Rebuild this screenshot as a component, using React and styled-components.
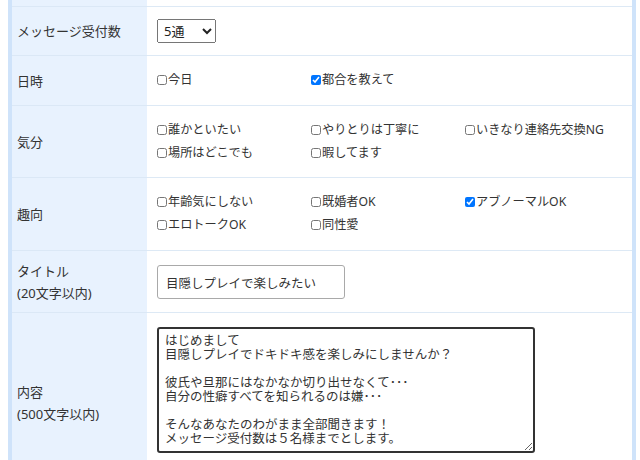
import React from "react";
import styled, { createGlobalStyle } from "styled-components";

const FONT = `"Noto Sans", "Noto Sans CJK JP", sans-serif`;

const Global = createGlobalStyle`
  html, body { margin: 0; padding: 0; background: #fff; }
  body { font-family: ${FONT}; color: #333; overflow: hidden; }
`;

const Table = styled.div`
  margin: 0 4px 0 8px;
  border-left: 4px solid #cfe3fa;
  border-right: 4px solid #cfe3fa;
  display: grid;
  grid-template-columns: 135px 1fr;
`;

const Label = styled.div`
  background: #e8f2fe;
  border-bottom: 1px solid #dbe8f6;
  display: flex;
  align-items: center;
  padding-left: 5px;
  font-size: 13px;
  line-height: 22px;
  color: #333;
  white-space: pre-line;
`;

const Cell = styled.div`
  border-bottom: 1px solid #dde9f5;
  padding: ${(p) => p.$pad || "15px 0 16px"};
  padding-left: 10px;
  display: flex;
  align-items: flex-start;
`;

const Select = styled.select`
  width: 59px;
  height: 24px;
  font-family: ${FONT};
  font-size: 13px;
  color: #222;
  padding: 0 2px;
`;

const Checks = styled.div`
  display: grid;
  grid-template-columns: repeat(3, 154px);
  row-gap: 5px;
`;

const Check = styled.label`
  display: flex;
  align-items: center;
  font-size: 12.2px;
  line-height: 18px;
  color: #333;
  white-space: nowrap;
  input {
    width: 10px;
    height: 10px;
    margin: 0 1px 0 0;
  }
`;

const TextInput = styled.input`
  box-sizing: border-box;
  width: 188px;
  height: 34px;
  border: 1px solid #a9a9a9;
  border-radius: 3px;
  padding: 0 8px;
  font-family: ${FONT};
  font-size: 12.5px;
  color: #333;
`;

const TextArea = styled.textarea`
  box-sizing: border-box;
  width: 378px;
  height: 126px;
  border: 2px solid #333;
  border-radius: 3px;
  padding: 5px 6px;
  font-family: ${FONT};
  font-size: 12.5px;
  line-height: 14px;
  color: #333;
  outline: none;
  margin: 0;
`;

const CheckGroup = ({ items }) => (
  <Checks>
    {items.map((it, i) => (
      <Check key={i}>
        <input type="checkbox" defaultChecked={it.c} />
        {it.t}
      </Check>
    ))}
  </Checks>
);

const message =
  "はじめまして\n目隠しプレイでドキドキ感を楽しみにしませんか？\n\n彼氏や旦那にはなかなか切り出せなくて･･･\n自分の性癖すべてを知られるのは嫌･･･\n\nそんなあなたのわがまま全部聞きます！\nメッセージ受付数は５名様までとします。";

export default function App() {
  return (
    <>
      <Global />
      <Table>
        <Label />
        <Cell $pad="6px 0 0" />

        <Label>メッセージ受付数</Label>
        <Cell $pad="12px 0 12px">
          <Select defaultValue="5">
            <option value="5">5通</option>
          </Select>
        </Cell>

        <Label>日時</Label>
        <Cell $pad="15px 0 16px">
          <CheckGroup items={[{ t: "今日" }, { t: "都合を教えて", c: true }]} />
        </Cell>

        <Label>気分</Label>
        <Cell $pad="15px 0 15px">
          <CheckGroup
            items={[
              { t: "誰かといたい" },
              { t: "やりとりは丁寧に" },
              { t: "いきなり連絡先交換NG" },
              { t: "場所はどこでも" },
              { t: "暇してます" },
            ]}
          />
        </Cell>

        <Label>趣向</Label>
        <Cell $pad="15px 0 16px">
          <CheckGroup
            items={[
              { t: "年齢気にしない" },
              { t: "既婚者OK" },
              { t: "アブノーマルOK", c: true },
              { t: "エロトークOK" },
              { t: "同性愛" },
            ]}
          />
        </Cell>

        <Label>{"タイトル\n(20文字以内)"}</Label>
        <Cell $pad="14px 0 13px">
          <TextInput defaultValue="目隠しプレイで楽しみたい" />
        </Cell>

        <Label>{"内容\n(500文字以内)"}</Label>
        <Cell $pad="14px 0 40px">
          <TextArea defaultValue={message} spellCheck={false} />
        </Cell>
      </Table>
    </>
  );
}
